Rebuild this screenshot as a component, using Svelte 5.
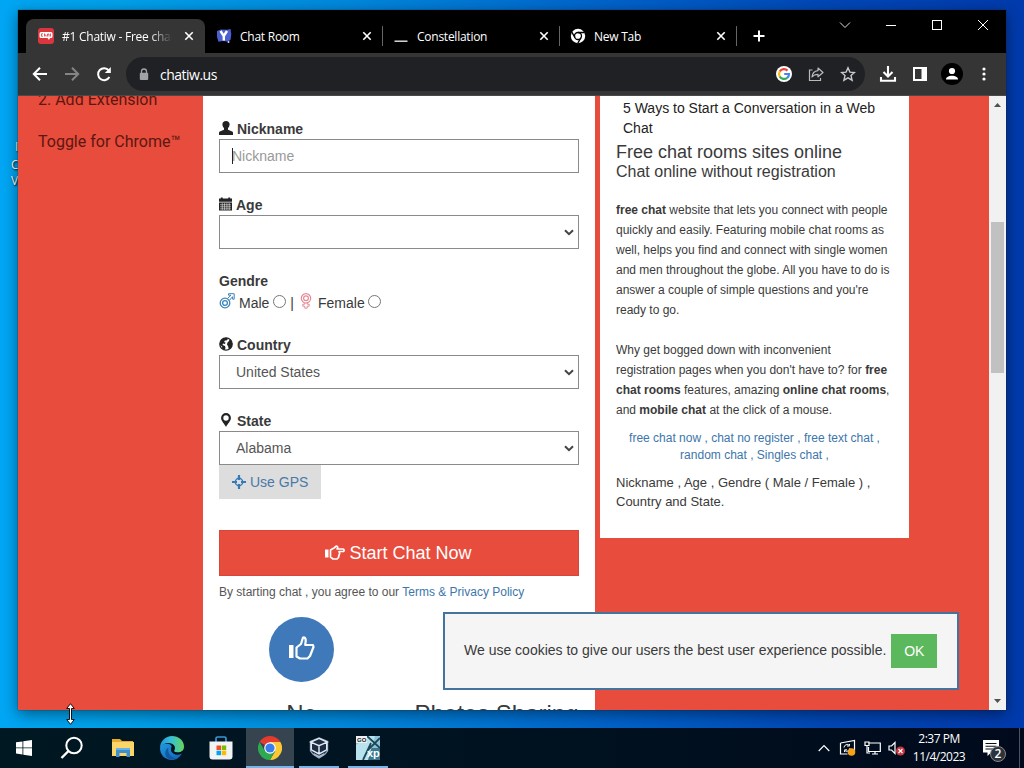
<script lang="ts">
  interface Tab {
    title: string;
    icon: 'chatiw' | 'room' | 'blank' | 'chrome';
    active?: boolean;
  }

  const tabs: Tab[] = [
    { title: '#1 Chatiw - Free chat', icon: 'chatiw', active: true },
    { title: 'Chat Room', icon: 'room' },
    { title: 'Constellation', icon: 'blank' },
    { title: 'New Tab', icon: 'chrome' },
  ];

  let nickname = $state('');
  let age = $state('');
  let country = $state('United States');
  let region = $state('Alabama');
</script>

{#snippet cross()}
  <svg class="cross" viewBox="0 0 10 10" width="10" height="10"><path d="M1.300 1.300l7.400 7.400M8.700 1.300L1.300 8.700" stroke="#fff" stroke-width="1.600" /></svg>
{/snippet}

{#snippet arrow()}
  <svg class="chevron" viewBox="0 0 10 7" width="10" height="7"><path d="M1 1.200l4 4 4-4" fill="none" stroke="#444" stroke-width="2" /></svg>
{/snippet}

<div class="desktop">
  <div class="shortcut"><span>I</span><span>C</span><span>V</span></div>

  <div class="window">
    <div class="tabstrip">
      {#each tabs as tab}
        <div class="tab" class:active={tab.active}>
          <span class="favicon">
            {#if tab.icon === 'chatiw'}
              <svg viewBox="0 0 16 16" width="16" height="16">
                <rect width="16" height="16" rx="3" fill="#d9363e" />
                <path d="M3 4h10a1.500 1.500 0 0 1 1.500 1.500v3a1.500 1.500 0 0 1-1.500 1.500h-1l-1 2-1.500-2H3a1.500 1.500 0 0 1-1.500-1.500v-3A1.500 1.500 0 0 1 3 4z" fill="#fff" />
                <path d="M5 5.800H3.500v2.400H5M6.500 5.500v3M6.500 7h1.500v1.500M9.500 8.500V6h1.500v2.500M12.500 5.500v3" fill="none" stroke="#d9363e" stroke-width=".8" />
              </svg>
            {:else if tab.icon === 'room'}
              <svg viewBox="0 0 16 16" width="16" height="16">
                <path d="M1 3l4-1.500 6 .3 3.500-.8.8 5-.8 6-3 1.500-5-.5-4 .8L1 9z" fill="#4d5fd0" />
                <path d="M4.500 3l3.300 5v4.500M11 3L7.800 8" fill="none" stroke="#fff" stroke-width="2.400" />
                <circle cx="12.500" cy="14" r="1" fill="#cfd4f5" />
              </svg>
            {:else if tab.icon === 'blank'}
              <svg viewBox="0 0 16 16" width="16" height="16"><path d="M1.500 13.200h13" stroke="#e8e8e8" stroke-width="1.400" /></svg>
            {:else}
              <svg viewBox="0 0 16 16" width="16" height="16">
                <circle cx="8" cy="8" r="7.200" fill="#fff" />
                <circle cx="8" cy="8" r="3.500" fill="none" stroke="#000" stroke-width="1.300" />
                <path d="M8 4.500h6.500M5 9.700L1.800 4.200M11 9.700L7.800 15.200" stroke="#000" stroke-width="1.300" />
              </svg>
            {/if}
          </span>
          <span class="tab-title">{tab.title}</span>
          {@render cross()}
        </div>
      {/each}
      <svg class="plus" viewBox="0 0 14 14" width="14" height="14"><path d="M7 1.500v11M1.500 7h11" stroke="#fff" stroke-width="2" /></svg>
      <div class="caption">
        <svg viewBox="0 0 12 12" width="12" height="12"><path d="M1 3.500l5 5 5-5" fill="none" stroke="#ddd" /></svg>
        <svg viewBox="0 0 12 12" width="12" height="12"><path d="M1 6.500h10" stroke="#fff" /></svg>
        <svg viewBox="0 0 12 12" width="12" height="12"><rect x="1.500" y="1.500" width="9" height="9" fill="none" stroke="#fff" /></svg>
        <svg viewBox="0 0 12 12" width="12" height="12"><path d="M1 1l10 10M11 1L1 11" stroke="#fff" /></svg>
      </div>
    </div>

    <div class="toolbar">
      <svg viewBox="0 0 16 16" width="16" height="16"><path d="M15 8H2M8 1.800L1.800 8 8 14.200" fill="none" stroke="#fff" stroke-width="2" /></svg>
      <svg viewBox="0 0 16 16" width="16" height="16"><path d="M1 8h13M8 1.800L14.200 8 8 14.200" fill="none" stroke="#858585" stroke-width="2" /></svg>
      <svg viewBox="0 0 16 16" width="16" height="16"><path d="M13.400 11a6 6 0 1 1-.6-6.600" fill="none" stroke="#fff" stroke-width="2" /><path d="M14.800 1v6H8.800z" fill="#fff" /></svg>
      <div class="omnibox">
        <svg viewBox="0 0 10 13" width="10" height="13"><path d="M2.500 6V3.500a2.500 2.500 0 0 1 5 0V6" fill="none" stroke="#a0a3a6" stroke-width="1.300" /><rect x=".8" y="4.800" width="8.400" height="7.200" rx="1" fill="#a0a3a6" /></svg>
        <span class="url">chatiw.us</span>
        <div class="omni-actions">
          <svg viewBox="0 0 16 16" width="16" height="16">
            <circle cx="8" cy="8" r="8" fill="#fff" />
            <g fill="none" stroke-width="2.200">
              <path d="M11.500 4.600A5 5 0 0 0 3.700 5.500" stroke="#ea4335" />
              <path d="M3.700 5.500a5 5 0 0 0 0 5" stroke="#fbbc05" />
              <path d="M3.700 10.500a5 5 0 0 0 7.500 1.300" stroke="#34a853" />
              <path d="M11.200 11.800A5 5 0 0 0 13 8H8.200" stroke="#4285f4" />
            </g>
          </svg>
          <svg viewBox="0 0 16 16" width="16" height="16"><path d="M4.500 4H1.500v10.500h11V12" fill="none" stroke="#b8babd" stroke-width="1.200" /><path d="M10 2l5 4.500-5 4.300V8.300C7.500 8.300 5.500 9 4 11c.3-3.500 2.500-6 6-6.400z" fill="none" stroke="#b8babd" stroke-width="1.200" stroke-linejoin="round" /></svg>
          <svg viewBox="0 0 16 16" width="16" height="16"><path d="M8 1.800l1.900 4.300 4.600.4-3.500 3.100 1.100 4.600L8 11.800l-4.100 2.400L5 9.600 1.500 6.500l4.600-.4z" fill="none" stroke="#c8cacd" stroke-width="1.400" /></svg>
        </div>
      </div>
      <div class="tools">
        <svg viewBox="0 0 18 18" width="18" height="18"><path d="M9 1v10M4.500 7L9 11.500 13.500 7M2 12v3.800h14V12" fill="none" stroke="#fff" stroke-width="2.100" /></svg>
        <svg viewBox="0 0 16 16" width="16" height="16"><rect x="2" y="2" width="12" height="12" fill="none" stroke="#fff" stroke-width="2" /><path d="M9.500 2H14v12H9.500z" fill="#fff" /></svg>
        <svg class="profile" viewBox="0 0 22 22" width="22" height="22"><circle cx="11" cy="11" r="11" fill="#000" /><circle cx="11" cy="8" r="3.100" fill="#fff" /><path d="M5 16.500c0-5 12-5 12 0z" fill="#fff" /></svg>
        <svg viewBox="0 0 6 16" width="6" height="16" fill="#fff"><circle cx="3" cy="3" r="1.600" /><circle cx="3" cy="8" r="1.600" /><circle cx="3" cy="13" r="1.600" /></svg>
      </div>
    </div>

    <div class="viewport">
      <aside class="left">
        <p>2. Add Extension</p>
        <p>Toggle for Chrome™</p>
      </aside>

      <main class="form">
        <div class="field">
          <label for="nick">
            <svg viewBox="0 0 14 14" width="14" height="14"><path d="M7 0c2.200 0 3.600 1.300 3.600 3.300 0 1.500-.7 3-1.600 3.900v1.600l4.200 1.700c.6.300.8.700.8 1.300V14H0v-2.200c0-.6.200-1 .8-1.300L5 8.800V7.200c-.9-.9-1.600-2.400-1.600-3.900C3.400 1.300 4.800 0 7 0z" fill="#222" /></svg>
            Nickname
          </label>
          <div class="control">
            <input id="nick" class="nick" placeholder="Nickname" bind:value={nickname} />
            <span class="caret"></span>
          </div>
        </div>
        <div class="field">
          <label for="age">
            <svg viewBox="0 0 14 14" width="13" height="14"><path d="M0 1h2V0h2v1h6V0h2v1h2v3.500H0zM0 5.300h14V14H0z" fill="#222" /><path d="M1 7.800h12M1 10h12M1 12.200h12M3.500 6v7.500M6 6v7.500M8.500 6v7.500M11 6v7.500" stroke="#fff" stroke-width=".6" /></svg>
            Age
          </label>
          <div class="control">
            <select id="age" bind:value={age}><option value=""></option></select>
            {@render arrow()}
          </div>
        </div>
        <div class="field gender">
          <strong>Gendre</strong>
          <div class="radios">
            <svg viewBox="0 0 16 16" width="16" height="16" fill="none" stroke="#3f86b8"><circle cx="6" cy="10" r="4.800" stroke-width="1.300" /><circle cx="6" cy="10" r="2.400" stroke-width="1.300" /><path d="M8.500 5.500L12 2.200H9.500V.7h5.700v5.500h-1.600V3.700L10.200 7.500" stroke-width="1" /></svg>
            <span>Male</span>
            <input type="radio" name="gender" aria-label="Male" />
            <span class="bar">|</span>
            <svg viewBox="0 0 12 16" width="12" height="16" fill="none" stroke="#e58a96"><circle cx="6" cy="5.300" r="4.700" stroke-width="1.200" /><circle cx="6" cy="5.300" r="2.400" stroke-width="1.200" /><path d="M4.800 10v1.200H2.800v2h2v2h2.400v-2h2v-2h-2V10" /></svg>
            <span class="female">Female</span>
            <input type="radio" name="gender" aria-label="Female" />
          </div>
        </div>
        <div class="field">
          <label for="country">
            <svg viewBox="0 0 14 14" width="14" height="14"><circle cx="7" cy="7" r="6.200" fill="#fff" stroke="#222" stroke-width="1.300" /><path d="M1 6l1-2.500L4 1.500 7.500.8 9 2 7.500 3.500 6 3.500 5 5l1.500.5L6 7 4 6.500 3.500 8 6 9l.5 2L5.500 13 3 11.500 3.200 9.500 1 8zM8.500 5.500L10 4l.5-1.500L12 3l1.200 3.200-.2 2.300-1.500 3-1.800 1-.5-3L8 7.500z" fill="#222" /></svg>
            Country
          </label>
          <div class="control">
            <select id="country" bind:value={country}><option>United States</option></select>
            {@render arrow()}
          </div>
        </div>
        <div class="field state">
          <label for="state">
            <svg viewBox="0 0 14 14" width="14" height="14"><path fill-rule="evenodd" d="M7 0a4.900 4.900 0 0 1 4.900 4.900C11.900 8 8.500 10.500 7 14 5.500 10.500 2.100 8 2.100 4.900A4.900 4.900 0 0 1 7 0zm0 2.300a2.700 2.700 0 1 0 0 5.400 2.700 2.700 0 0 0 0-5.400z" fill="#222" /></svg>
            State
          </label>
          <div class="control">
            <select id="state" bind:value={region}><option>Alabama</option></select>
            {@render arrow()}
          </div>
          <button class="gps">
            <svg viewBox="0 0 14 14" width="14" height="14" fill="none" stroke="#337ab7"><circle cx="7" cy="7" r="3.700" stroke-width="1.400" /><path d="M7 0v5M7 9v5M0 7h5M9 7h5" stroke-width="2.200" /></svg>
            Use GPS
          </button>
        </div>
        <button class="start">
          <svg viewBox="0 0 20 16" width="20" height="16"><path d="M0 4.500h3.500v8H0z" fill="#fff" /><path d="M5.500 5L9 3l2.500-2c1.500.3 1.700 1.700.5 3h6c1.500 0 1.500 2.500 0 2.500h-4l.7 1.700-.7 2-.5 2.300-1.500 1.500H8L5.500 12z" fill="none" stroke="#fff" stroke-width="1.700" stroke-linejoin="round" /></svg>
          Start Chat Now
        </button>
        <p class="terms">By starting chat , you agree to our <a href="#terms">Terms &amp; Privacy Policy</a></p>
        <div class="features">
          <div class="feature">
            <div class="badge">
              <svg viewBox="0 0 26 24" width="26" height="24"><path d="M0 9h4.500v13H0z" fill="#fff" /><path d="M7.500 11.500L12 8l2-6.500c2.500-.3 3.500 1.500 2.200 7.500H24l.5 2-3.500 9-2.500 2.500H11l-3.500-2z" fill="none" stroke="#fff" stroke-width="2.200" stroke-linejoin="round" /></svg>
            </div>
            <h2>No</h2>
          </div>
          <div class="feature">
            <div class="badge"></div>
            <h2>Photos Sharing</h2>
          </div>
        </div>
      </main>

      <section class="info">
        <p class="article">5 Ways to Start a Conversation in a Web<br />Chat</p>
        <h3>Free chat rooms sites online</h3>
        <h4>Chat online without registration</h4>
        <p class="copy"><b>free chat</b> website that lets you connect with people<br />quickly and easily. Featuring mobile chat rooms as<br />well, helps you find and connect with single women<br />and men throughout the globe. All you have to do is<br />answer a couple of simple questions and you're<br />ready to go.</p>
        <p class="copy">Why get bogged down with inconvenient<br />registration pages when you don't have to? for <b>free</b><br /><b>chat rooms</b> features, amazing <b>online chat rooms</b>,<br />and <b>mobile chat</b> at the click of a mouse.</p>
        <p class="links">
          <a href="#now">free chat now ,</a> <a href="#register">chat no register ,</a> <a href="#text">free text chat ,</a><br />
          <a href="#random">random chat ,</a> <a href="#singles">Singles chat ,</a>
        </p>
        <p class="summary">Nickname , Age , Gendre ( Male / Female ) ,<br />Country and State.</p>
      </section>

      <div class="scrollbar">
        <svg viewBox="0 0 7 4" width="7" height="4"><path d="M0 4l3.500-4L7 4z" fill="#505050" /></svg>
        <div class="thumb"></div>
        <svg viewBox="0 0 7 4" width="7" height="4"><path d="M0 0l3.500 4L7 0z" fill="#505050" /></svg>
      </div>

      <div class="cookies">
        <span>We use cookies to give our users the best user experience possible.</span>
        <button>OK</button>
      </div>
    </div>
  </div>

  <svg class="cursor" viewBox="0 0 9 22" width="9" height="22"><path d="M4.500 .7L8.300 5.500H5.500v11h2.800L4.500 21.300.7 16.500h2.800v-11H.7z" fill="#fff" stroke="#000" stroke-width=".9" /></svg>

  <div class="taskbar">
    <div class="task start-menu">
      <svg viewBox="0 0 16 16" width="16" height="16" fill="#fff"><path d="M0 2.300l6.500-.9v6.100H0zM7.300 1.300L16 0v7.500H7.300zM0 8.300h6.500v6.200L0 13.600zM7.300 8.300H16V16l-8.700-1.300z" /></svg>
    </div>
    <div class="task search">
      <svg viewBox="0 0 24 24" width="24" height="24" fill="none" stroke="#fff"><circle cx="14" cy="9.500" r="7.700" stroke-width="2" /><path d="M8.500 15L1.500 22" stroke-width="2.400" /></svg>
    </div>
    <div class="task">
      <svg viewBox="0 0 22 20" width="22" height="20"><path d="M0 1h8l2 2h11v4H0z" fill="#e8a92e" /><path d="M0 4h22v14H0z" fill="#fcd56a" /><path d="M4 10h14v9h-3.500v-4h-7v4H4z" fill="#3f8fcd" /><path d="M4 10h14v2H4z" fill="#67b2e4" /></svg>
    </div>
    <div class="task">
      <svg viewBox="0 0 24 24" width="24" height="24">
        <defs>
          <linearGradient id="edgeTop" x1="0" x2="1"><stop offset="0" stop-color="#2196dc" /><stop offset=".45" stop-color="#35bfd8" /><stop offset="1" stop-color="#67d65b" /></linearGradient>
          <linearGradient id="edgeLow" x1="0" y1="0" x2="1" y2="1"><stop offset="0" stop-color="#1f9ae0" /><stop offset="1" stop-color="#1261b0" /></linearGradient>
        </defs>
        <path d="M0 12C1 8 5 7 9 8c3 1 3 3 2 5 0 5 6 7 11 4.500C19 22 16 24 12 24 5 24 0 19 0 12z" fill="url(#edgeLow)" />
        <path d="M0 12C0 5 5.500 0 12 0s12 4.500 12 10.500c0 4-3 6-6 6-3.500 0-4.500-1.500-3.500-2.500 1-2 .5-4.500-2-6C8.500 5.500 2 7.500 0 12z" fill="url(#edgeTop)" />
        <path d="M8.500 11.500C7 17 11 21.500 16 22.300c-3 1.500-5.500 1.500-7.500.7C4 20.500 4.500 13.500 8.500 11.500z" fill="#1458a5" />
        <path d="M12.500 9.800c2 1 2.300 2.700 1.500 4.200-.8 1.300.5 2.500 3.500 2.500 2 0 4-.6 5.200-1.500-.5 1.500-1.200 2.400-2 3-4 1.500-9.500-.5-9.700-4.500z" fill="#001420" />
      </svg>
    </div>
    <div class="task">
      <svg viewBox="0 0 24 24" width="24" height="24"><path d="M7 6V2.500Q7 1 8.500 1h7Q17 1 17 2.500V6" fill="none" stroke="#3a96d5" stroke-width="1.700" /><path d="M.5 5.500h23v15a3 3 0 0 1-3 3h-17a3 3 0 0 1-3-3z" fill="#f1f3f5" /><path d="M7.500 9.500H12V14H7.500z" fill="#f25022" /><path d="M12.700 9.500h4.500V14h-4.500z" fill="#7fba00" /><path d="M7.500 14.700H12v4.500H7.500z" fill="#00a4ef" /><path d="M12.700 14.700h4.500v4.500h-4.500z" fill="#ffb900" /></svg>
    </div>
    <div class="task running current">
      <svg viewBox="0 0 24 24" width="24" height="24">
        <path d="M12 12L1.600 6A12 12 0 0 1 22.400 6z" fill="#e33b2e" />
        <path d="M12 12V6h10.400A12 12 0 0 1 12 24l5.200-9z" fill="#fcc934" />
        <path d="M1.600 6A12 12 0 0 0 12 24l5.200-9H6.800z" fill="#2da94f" />
        <circle cx="12" cy="12" r="5.800" fill="#fff" /><circle cx="12" cy="12" r="4.600" fill="#3b7ded" />
      </svg>
    </div>
    <div class="task running">
      <svg viewBox="0 0 22 24" width="20" height="24"><path d="M11 .8l9.500 4V15l-3 4-6.500 4-6.500-4-3-4V4.800z" fill="#1b2c44" stroke="#9badc2" stroke-width="1.200" /><path d="M2 5.500l9 4 9-4-9-4zM11 9.500V18M2.500 6v8l8.500 4.500 8.500-4.500V6" fill="none" stroke="#e3ebf4" stroke-width="1.600" /><path d="M5 17.500l6 3 6-3v2l-6 3.500-6-3.500z" fill="#aab9cc" /></svg>
    </div>
    <div class="task running">
      <svg viewBox="0 0 24 24" width="24" height="24"><rect width="24" height="24" fill="#8cc3d8" /><path d="M12 12h12v12H10z" fill="#3b788f" /><path d="M13 0h6l-7 24H0V9z" fill="#b9e2ef" /><path d="M11 0l13 12M15 7L7 24M24 2L12 14" stroke="#1d4757" stroke-width="1.800" /><path d="M0 0h11v7H0z" fill="#edf1f3" /><text x="1" y="6" class="go">GO</text><text x="11" y="21" class="xp">xp</text></svg>
    </div>

    <div class="tray">
      <svg viewBox="0 0 12 8" width="12" height="8"><path d="M.7 7L6 1.500 11.300 7" fill="none" stroke="#fff" stroke-width="1.200" /></svg>
      <svg viewBox="0 0 18 18" width="18" height="18"><path d="M1.500 4L15.500 1.500v10M1.500 4v11h7" fill="none" stroke="#fff" stroke-width="1.200" /><path d="M5 8.500A3.200 3.200 0 0 1 10.500 6.500V5M10.500 7H8M11 9a3.200 3.200 0 0 1-5.500 2.300V13M5.500 10.800H8" fill="none" stroke="#fff" /><circle cx="12.500" cy="13" r="3.800" fill="#f5a31b" /></svg>
      <svg viewBox="0 0 17 16" width="17" height="16" fill="none" stroke="#fff" stroke-width="1.200"><path d="M4.500 3h11.800v8.500H4.500V7M8 14h6M11 11.500V14" /><path d="M1 2h4v3.500H1zM3 5.500V13h3" /></svg>
      <svg viewBox="0 0 18 16" width="18" height="16"><path d="M1 6h2.500L7 2.500v11L3.500 10H1z" fill="none" stroke="#fff" stroke-width="1.200" /><circle cx="12.500" cy="11" r="4.500" fill="#c9343d" /><path d="M10.500 9l4 4M14.500 9l-4 4" stroke="#fff" stroke-width="1.200" /></svg>
    </div>
    <div class="clock"><span>2:37 PM</span><span>11/4/2023</span></div>
    <div class="notice">
      <svg viewBox="0 0 16 16" width="16" height="16"><path d="M0 0h16v12.500H8L4.500 16v-3.500H0z" fill="#fff" /><path d="M2.500 3.500h11M2.500 6.200h11M2.500 9h11" stroke="#07101e" stroke-width="1.100" /></svg>
      <span class="count">2</span>
    </div>
    <div class="peek"></div>
  </div>
</div>

<style>
  :global(body) {
    margin: 0;
    overflow: hidden;
  }

  .desktop {
    position: relative;
    width: 1024px;
    height: 768px;
    overflow: hidden;
    background: linear-gradient(90deg, #00a6f4 0%, #00a0ea 12%, #0088dd 34%, #0065cc 58%, #0048b8 80%, #003aac 100%);
    font-family: "Liberation Sans", Arial, sans-serif;
    font-size: 14px;
    color: #3a3a3a;
  }

  .desktop * {
    box-sizing: border-box;
  }

  svg {
    display: block;
    flex: none;
  }

  p, h2, h3, h4 {
    margin: 0;
    font-weight: 400;
  }

  a {
    color: #3c76ab;
    text-decoration: none;
  }

  button {
    font-family: inherit;
    border: 0;
    padding: 0;
  }

  .shortcut {
    position: absolute;
    left: 11px;
    top: 139px;
    display: flex;
    flex-direction: column;
    font: 12px/16px "Open Sans", sans-serif;
    color: #fff;
    text-shadow: 1px 1px 2px #000;
  }

  .shortcut span:first-child {
    padding-left: 4px;
    margin-bottom: 2px;
  }

  .window {
    position: absolute;
    left: 18px;
    top: 10px;
    width: 988px;
    height: 700px;
    display: flex;
    flex-direction: column;
    background: #353535;
    box-shadow: 0 0 1px #222, 0 4px 14px rgba(0, 0, 0, 0.45);
  }

  .tabstrip {
    height: 43px;
    display: flex;
    align-items: flex-end;
    background: #000;
    padding-left: 8px;
    font: 12px "Open Sans", sans-serif;
    color: #fff;
  }

  .tab {
    width: 177px;
    height: 34px;
    display: flex;
    align-items: center;
    padding: 0 11px 0 10px;
    border-radius: 8px 8px 0 0;
  }

  .tab:not(.active) {
    background: linear-gradient(#666, #666) right 7px / 1px 20px no-repeat;
  }

  .tab.active {
    width: 179px;
    margin-right: 1px;
    padding: 0 11px 0 12px;
    background: #353535;
  }

  .tab-title {
    flex: 1;
    margin-left: 8px;
    overflow: hidden;
    white-space: nowrap;
    letter-spacing: -0.25px;
  }

  .active .tab-title {
    flex: none;
    width: 110px;
    mask-image: linear-gradient(90deg, #000 80%, transparent);
  }

  .active .cross {
    margin-left: auto;
  }

  .plus {
    margin: 0 0 10px 15px;
  }

  .caption {
    display: flex;
    gap: 34px;
    margin-left: auto;
    padding-right: 17px;
    align-self: flex-start;
    padding-top: 9px;
  }

  .toolbar {
    height: 43px;
    display: flex;
    align-items: center;
    padding-left: 14px;
    gap: 16px;
    border-bottom: 1px solid #4a4a4a;
  }

  .omnibox {
    width: 739px;
    height: 34px;
    margin-left: -2px;
    display: flex;
    align-items: center;
    padding: 0 9px 0 13px;
    border-radius: 17px;
    background: #202124;
    color: #fff;
  }

  .url {
    margin-left: 11px;
    font: 14px "Open Sans", sans-serif;
    letter-spacing: -0.5px;
  }

  .omni-actions {
    display: flex;
    gap: 16px;
    margin-left: auto;
  }

  .tools {
    display: flex;
    align-items: center;
    gap: 15px;
    margin-left: -2px;
  }

  .tools .profile {
    margin-left: -2px;
  }

  .tools svg:last-child {
    margin-left: 3px;
  }

  .viewport {
    position: relative;
    flex: 1;
    min-height: 0;
    display: flex;
    align-items: flex-start;
    background: #e74c3c;
    overflow: hidden;
  }

  .left {
    width: 185px;
    padding-left: 20px;
    margin-top: -17px;
    font: 16px/42px Roboto, sans-serif;
    color: #5c1710;
  }

  .form {
    width: 392px;
    height: 614px;
    overflow: hidden;
    padding: 23px 16px 0;
    background: #fff;
  }

  .field {
    height: 76px;
  }

  .field label,
  .field strong {
    display: flex;
    align-items: center;
    gap: 4px;
    height: 20px;
    font-weight: 700;
  }

  .field label svg {
    margin-top: -2px;
  }

  .control {
    position: relative;
  }

  .control input,
  .control select {
    display: block;
    width: 360px;
    height: 34px;
    margin: 0;
    padding: 0 12px;
    border: 1px solid #8a8a8a;
    border-radius: 0;
    background: #fff;
    font: 14px "Liberation Sans", Arial, sans-serif;
    color: #555;
    outline: none;
    appearance: none;
  }

  .control select {
    padding-left: 16px;
  }

  .nick::placeholder {
    color: #999;
  }

  .caret {
    position: absolute;
    left: 13px;
    top: 9px;
    width: 1px;
    height: 16px;
    background: #222;
  }

  .chevron {
    position: absolute;
    right: 5px;
    top: 14px;
  }

  .gender {
    height: 64px;
  }

  .radios {
    display: flex;
    align-items: center;
    height: 23px;
  }

  .radios span {
    margin-left: 4px;
  }

  .radios svg {
    margin-top: -4px;
  }

  .radios input {
    appearance: none;
    width: 13px;
    height: 13px;
    margin: -2px 0 0 4px;
    border: 1px solid #767676;
    border-radius: 50%;
  }

  .radios .bar + svg {
    margin-left: 6px;
  }

  .radios .female {
    margin-left: 6px;
  }

  .radios .female + input {
    margin-left: 3px;
  }

  .state {
    height: 119px;
  }

  .gps {
    display: flex;
    align-items: center;
    gap: 4px;
    width: 102px;
    height: 34px;
    padding-left: 13px;
    background: #ddd;
    font-size: 14px;
    color: #4a79a8;
  }

  .start {
    display: flex;
    align-items: center;
    justify-content: center;
    gap: 4px;
    width: 360px;
    height: 46px;
    padding-right: 1px;
    border: 1px solid #d5473a;
    background: #e74c3c;
    font-size: 18px;
    color: #fff;
  }

  .terms {
    margin-top: 8px;
    font-size: 12px;
    line-height: 17px;
    white-space: nowrap;
    color: #555;
  }

  .features {
    display: flex;
    padding-top: 16px;
  }

  .feature {
    width: 165px;
    display: flex;
    flex-direction: column;
    align-items: center;
  }

  .feature + .feature {
    width: 195px;
    padding-left: 30px;
  }

  .feature + .feature .badge {
    visibility: hidden;
  }

  .badge {
    display: flex;
    align-items: center;
    justify-content: center;
    width: 65px;
    height: 65px;
    padding-bottom: 4px;
    border-radius: 50%;
    background: #3f79b9;
  }

  .feature h2 {
    margin-top: 18px;
    font-size: 24px;
    line-height: 27px;
    white-space: nowrap;
  }

  .info {
    width: 309px;
    height: 442px;
    margin-left: 5px;
    padding: 2px 16px 0;
    background: #fff;
    white-space: nowrap;
  }

  .article {
    padding-left: 7px;
    line-height: 20px;
    color: #222;
  }

  .info h3 {
    margin-top: 3px;
    font-size: 18px;
    line-height: 22px;
  }

  .info h4 {
    font-size: 16px;
    line-height: 17px;
  }

  .copy {
    margin-top: 20px;
    font-size: 12px;
    line-height: 20px;
  }

  .links {
    margin-top: 10px;
    font-size: 12px;
    line-height: 17px;
    text-align: center;
  }

  .summary {
    margin-top: 9px;
    font-size: 13px;
    line-height: 19px;
  }

  .scrollbar {
    width: 17px;
    height: 614px;
    margin-left: auto;
    display: flex;
    flex-direction: column;
    align-items: center;
    justify-content: space-between;
    padding: 7px 0;
    background: #f1f1f1;
  }

  .thumb {
    width: 13px;
    height: 151px;
    margin: 115px 0 auto;
    background: #c1c1c1;
  }

  .cookies {
    position: absolute;
    left: 425px;
    top: 516px;
    width: 516px;
    height: 78px;
    display: flex;
    align-items: center;
    padding-left: 19px;
    border: 2px solid #43749d;
    background: #f5f5f5;
    white-space: nowrap;
  }

  .cookies span {
    padding-bottom: 2px;
  }

  .cookies button {
    width: 46px;
    height: 34px;
    margin-left: 5px;
    background: #5cb85c;
    font-size: 14px;
    color: #fff;
  }

  .cursor {
    position: absolute;
    left: 66px;
    top: 703px;
  }

  .taskbar {
    position: absolute;
    left: 0;
    right: 0;
    bottom: 0;
    height: 40px;
    display: flex;
    align-items: stretch;
    gap: 1px;
    background: linear-gradient(90deg, #001822, #001220 50%, #000a1c);
    font: 12px "Open Sans", sans-serif;
    color: #fff;
  }

  .task {
    width: 48px;
    display: flex;
    align-items: center;
    justify-content: center;
  }

  .task.start-menu {
    width: 47px;
  }

  .task.search {
    margin-right: 2px;
  }

  .running {
    background: linear-gradient(#76b5ea, #76b5ea) center bottom / 40px 2px no-repeat;
  }

  .current {
    background: linear-gradient(#76b5ea, #76b5ea) center bottom / 48px 2px no-repeat, #35444f;
  }

  .go {
    font: bold 6px "Liberation Sans", sans-serif;
    fill: #222;
  }

  .xp {
    font: bold 11px "Liberation Sans", sans-serif;
    fill: #fff;
  }

  .tray {
    display: flex;
    align-items: center;
    gap: 7px;
    margin-left: auto;
  }

  .tray svg:first-child {
    margin-right: 2px;
  }

  .clock {
    width: 66px;
    display: flex;
    flex-direction: column;
    justify-content: center;
    align-items: center;
    margin-left: -1px;
    line-height: 18px;
    letter-spacing: -0.5px;
  }

  .notice {
    position: relative;
    width: 45px;
    padding: 12px 0 0 10px;
  }

  .count {
    position: absolute;
    left: 17px;
    top: 18px;
    width: 16px;
    height: 16px;
    border: 1px solid #888;
    border-radius: 50%;
    background: #2c333d;
    font-weight: 600;
    line-height: 14px;
    text-align: center;
  }

  .peek {
    width: 5px;
    border-left: 1px solid #4c525e;
  }
</style>
